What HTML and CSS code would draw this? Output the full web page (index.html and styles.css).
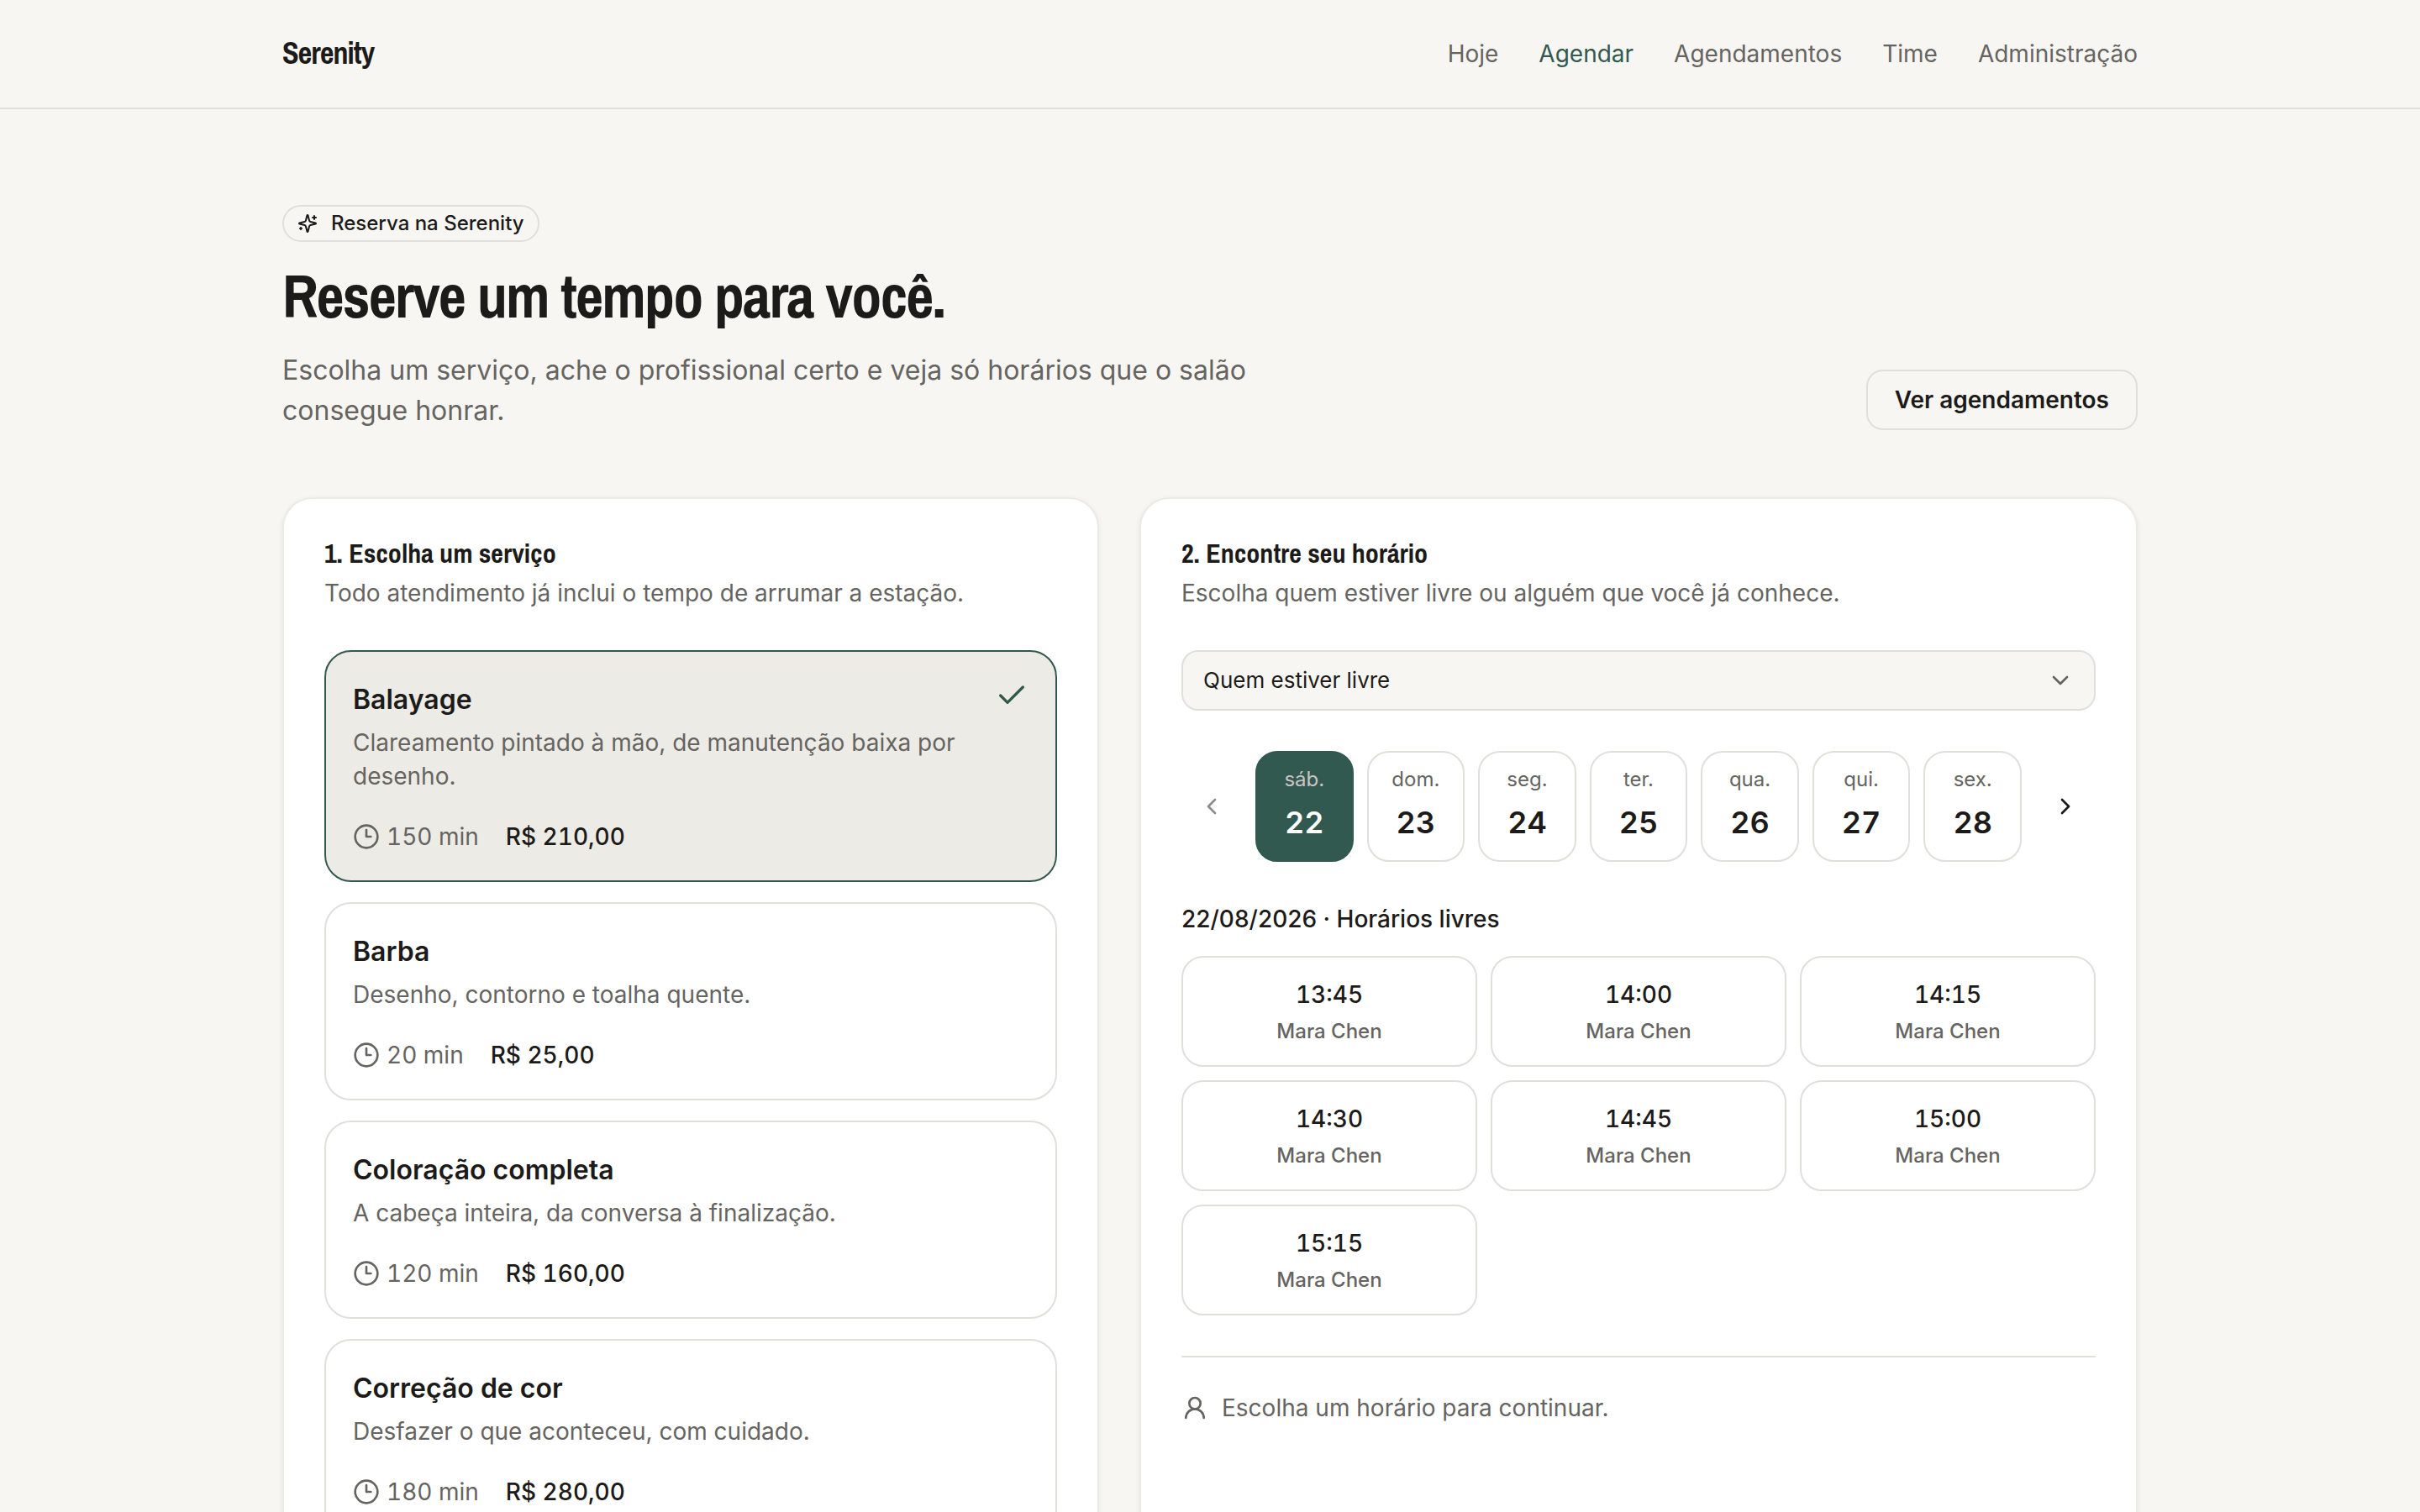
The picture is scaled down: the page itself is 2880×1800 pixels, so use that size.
FILE: index.html
```html
<!DOCTYPE html>
<html lang="pt-BR">
<head>
  <meta charset="UTF-8">
  <meta name="viewport" content="width=device-width, initial-scale=1.0">
  <title>Serenity</title>
  <link rel="stylesheet" href="styles.css">
</head>
<body>
  <!-- Shared icons -->
  <svg class="sprite" aria-hidden="true">
    <symbol id="clock" viewBox="0 0 24 24"><circle cx="12" cy="12" r="10"/><path d="M12 6v6h4"/></symbol>
    <symbol id="check" viewBox="0 0 24 24"><path d="M20 6 9 17l-5-5"/></symbol>
    <symbol id="user" viewBox="0 0 24 24"><circle cx="12" cy="8" r="5"/><path d="M20 21a8 8 0 0 0-16 0"/></symbol>
    <symbol id="chevron-down" viewBox="0 0 24 24"><path d="m6 9 6 6 6-6"/></symbol>
    <symbol id="chevron-left" viewBox="0 0 24 24"><path d="m15 18-6-6 6-6"/></symbol>
    <symbol id="chevron-right" viewBox="0 0 24 24"><path d="m9 18 6-6-6-6"/></symbol>
    <symbol id="sparkles" viewBox="0 0 24 24"><path d="M9.937 15.5A2 2 0 0 0 8.5 14.063l-6.135-1.582a.5.5 0 0 1 0-.962L8.5 9.936A2 2 0 0 0 9.937 8.5l1.582-6.135a.5.5 0 0 1 .963 0L14.063 8.5A2 2 0 0 0 15.5 9.937l6.135 1.581a.5.5 0 0 1 0 .964L15.5 14.063a2 2 0 0 0-1.437 1.437l-1.582 6.135a.5.5 0 0 1-.963 0z"/><path d="M20 3v4"/><path d="M22 5h-4"/><path d="M4 17v2"/><path d="M5 18H3"/></symbol>
  </svg>

  <header class="site-header">
    <div class="container header-inner">
      <a class="brand">Serenity</a>
      <nav class="nav">
        <a>Hoje</a>
        <a class="active">Agendar</a>
        <a>Agendamentos</a>
        <a>Time</a>
        <a>Administração</a>
      </nav>
    </div>
  </header>

  <main class="container main">
    <section class="intro">
      <div class="intro-text">
        <span class="badge"><svg class="icon icon-sm"><use href="#sparkles"/></svg>Reserva na Serenity</span>
        <h1>Reserve um tempo para você.</h1>
        <p>Escolha um serviço, ache o profissional certo e veja só horários que o salão consegue honrar.</p>
      </div>
      <a class="button">Ver agendamentos</a>
    </section>

    <div class="columns">
      <section class="card">
        <h2>1. Escolha um serviço</h2>
        <p class="card-description">Todo atendimento já inclui o tempo de arrumar a estação.</p>
        <div class="services">
          <div class="service selected">
            <div class="service-top">
              <div>
                <h3>Balayage</h3>
                <p>Clareamento pintado à mão, de manutenção baixa por desenho.</p>
              </div>
              <svg class="icon icon-lg"><use href="#check"/></svg>
            </div>
            <div class="meta"><span class="duration"><svg class="icon"><use href="#clock"/></svg>150 min</span><span class="price">R$ 210,00</span></div>
          </div>
          <div class="service">
            <h3>Barba</h3>
            <p>Desenho, contorno e toalha quente.</p>
            <div class="meta"><span class="duration"><svg class="icon"><use href="#clock"/></svg>20 min</span><span class="price">R$ 25,00</span></div>
          </div>
          <div class="service">
            <h3>Coloração completa</h3>
            <p>A cabeça inteira, da conversa à finalização.</p>
            <div class="meta"><span class="duration"><svg class="icon"><use href="#clock"/></svg>120 min</span><span class="price">R$ 160,00</span></div>
          </div>
          <div class="service">
            <h3>Correção de cor</h3>
            <p>Desfazer o que aconteceu, com cuidado.</p>
            <div class="meta"><span class="duration"><svg class="icon"><use href="#clock"/></svg>180 min</span><span class="price">R$ 280,00</span></div>
          </div>
        </div>
      </section>

      <section class="card">
        <h2>2. Encontre seu horário</h2>
        <p class="card-description">Escolha quem estiver livre ou alguém que você já conhece.</p>
        <div class="select"><span>Quem estiver livre</span><svg class="icon"><use href="#chevron-down"/></svg></div>

        <div class="week">
          <button class="arrow" disabled aria-label="Semana anterior"><svg class="icon"><use href="#chevron-left"/></svg></button>
          <div class="days">
            <div class="day selected"><span>sáb.</span><strong>22</strong></div>
            <div class="day"><span>dom.</span><strong>23</strong></div>
            <div class="day"><span>seg.</span><strong>24</strong></div>
            <div class="day"><span>ter.</span><strong>25</strong></div>
            <div class="day"><span>qua.</span><strong>26</strong></div>
            <div class="day"><span>qui.</span><strong>27</strong></div>
            <div class="day"><span>sex.</span><strong>28</strong></div>
          </div>
          <button class="arrow" aria-label="Próxima semana"><svg class="icon"><use href="#chevron-right"/></svg></button>
        </div>

        <p class="slots-title">22/08/2026 · Horários livres</p>
        <div class="slots">
          <div class="slot"><strong>13:45</strong><span>Mara Chen</span></div>
          <div class="slot"><strong>14:00</strong><span>Mara Chen</span></div>
          <div class="slot"><strong>14:15</strong><span>Mara Chen</span></div>
          <div class="slot"><strong>14:30</strong><span>Mara Chen</span></div>
          <div class="slot"><strong>14:45</strong><span>Mara Chen</span></div>
          <div class="slot"><strong>15:00</strong><span>Mara Chen</span></div>
          <div class="slot"><strong>15:15</strong><span>Mara Chen</span></div>
        </div>

        <div class="hint"><svg class="icon"><use href="#user"/></svg>Escolha um horário para continuar.</div>
      </section>
    </div>
  </main>
</body>
</html>
```
FILE: styles.css
```css
* {
  box-sizing: border-box;
}
body {
  margin: 0;
  height: 1800px;
  overflow: hidden;
  background-color: #f7f6f2;
  color: #1c1b19;
  font-family: Inter, sans-serif;
  font-size: 28px;
  line-height: 40px;
}
h1, h2, h3, p {
  margin: 0;
}
h1, h2, .brand {
  font-family: "Archivo Narrow", "Liberation Sans Narrow", "Arial Narrow", sans-serif;
  font-weight: 700;
}
.sprite {
  display: none;
}
.icon {
  width: 32px;
  height: 32px;
  flex: none;
  fill: none;
  stroke: currentColor;
  stroke-width: 2;
  stroke-linecap: round;
  stroke-linejoin: round;
}
.icon-sm {
  width: 24px;
  height: 24px;
}
.icon-lg {
  width: 40px;
  height: 40px;
  color: #32594f;
}
.container {
  width: 2208px;
  margin: 0 auto;
}

/* Header */
.site-header {
  border-bottom: 2px solid #dfdfdc;
}
.header-inner {
  height: 128px;
  display: flex;
  align-items: center;
  justify-content: space-between;
}
.brand {
  padding-bottom: 2px;
  font-size: 36px;
  letter-spacing: -0.9px;
}
.nav {
  display: flex;
  gap: 48px;
  color: #666461;
}
.nav .active {
  color: #32594f;
}

/* Intro */
.main {
  padding-top: 114px;
}
.intro {
  display: flex;
  justify-content: space-between;
  align-items: flex-end;
  height: 268px;
}
.intro-text {
  width: 1152px;
  height: 268px;
}
.badge {
  display: flex;
  align-items: center;
  gap: 16px;
  width: max-content;
  height: 44px;
  padding: 0 16px;
  border: 2px solid #dfdfdc;
  border-radius: 22px;
  font-size: 24px;
  font-weight: 500;
}
h1 {
  margin-top: 24px;
  font-size: 72px;
  line-height: 80px;
  letter-spacing: -1.8px;
}
.intro-text p {
  margin-top: 25px;
  font-size: 32px;
  line-height: 48px;
  color: #666461;
}
.button {
  height: 72px;
  padding: 14px 32px;
  border: 2px solid #dfdfdc;
  border-radius: 20px;
  font-weight: 600;
}

/* Cards */
.columns {
  margin-top: 80px;
  display: grid;
  grid-template-columns: 972px 1188px;
  gap: 48px;
}
.card {
  height: 1700px;
  padding: 48px;
  background-color: #fff;
  border: 2px solid #ebeae5;
  border-radius: 36px;
  box-shadow: 0 2px 6px rgba(0, 0, 0, 0.07);
}
h2 {
  font-size: 32px;
  line-height: 34px;
}
.card-description {
  margin: 10px 0 48px;
  color: #666461;
}

/* Services */
.services {
  display: grid;
  gap: 24px;
}
.service {
  padding: 32px;
  border: 2px solid #dfdfdc;
  border-radius: 32px;
}
.service.selected {
  background-color: #ecebe5;
  border-color: #32594f;
}
.service-top {
  display: flex;
  justify-content: space-between;
  gap: 24px;
}
.service h3 {
  font-size: 32px;
  line-height: 50px;
  font-weight: 600;
}
.service p {
  margin-top: 6px;
  color: #666461;
}
.meta {
  margin-top: 32px;
  display: flex;
  gap: 32px;
  font-variant-numeric: tabular-nums;
}
.duration {
  display: flex;
  align-items: center;
  gap: 8px;
  color: #666461;
}
.price {
  font-weight: 500;
}

/* Professional select */
.select {
  height: 72px;
  padding: 0 24px;
  display: flex;
  align-items: center;
  justify-content: space-between;
  background-color: #f7f6f2;
  border: 2px solid #dfdfdc;
  border-radius: 20px;
  font-size: 26px;
}
.select .icon {
  color: #666461;
}

/* Days */
.week {
  margin-top: 48px;
  display: flex;
  align-items: center;
  gap: 16px;
}
.arrow {
  width: 72px;
  height: 72px;
  padding: 0;
  display: flex;
  align-items: center;
  justify-content: center;
  border: none;
  background: none;
  color: #1c1b19;
}
.arrow:disabled {
  opacity: 0.5;
}
.days {
  flex: 1;
  display: grid;
  grid-template-columns: repeat(7, 1fr);
  gap: 16px;
}
.day {
  height: 132px;
  padding-top: 16px;
  border: 2px solid #dfdfdc;
  border-radius: 26px;
  display: flex;
  flex-direction: column;
  align-items: center;
}
.day span {
  font-size: 24px;
  line-height: 32px;
  color: #666461;
}
.day strong {
  margin-top: 7px;
  font-size: 36px;
  line-height: 56px;
  font-weight: 600;
  font-variant-numeric: tabular-nums;
}
.day.selected {
  background-color: #32594f;
  border-color: #32594f;
  color: #fff;
}
.day.selected span {
  color: #c8c5c2;
}

/* Time slots */
.slots-title {
  margin-top: 48px;
  font-weight: 500;
}
.slots {
  margin-top: 24px;
  display: grid;
  grid-template-columns: repeat(3, 1fr);
  gap: 16px;
}
.slot {
  height: 132px;
  padding-top: 24px;
  border: 2px solid #dfdfdc;
  border-radius: 26px;
  display: flex;
  flex-direction: column;
  align-items: center;
}
.slot strong {
  font-weight: 500;
  font-variant-numeric: tabular-nums;
}
.slot span {
  margin-top: 8px;
  font-size: 24px;
  line-height: 32px;
  font-weight: 500;
  color: #666461;
}
.hint {
  margin-top: 48px;
  padding-top: 40px;
  border-top: 2px solid #dfdfdc;
  display: flex;
  align-items: center;
  gap: 16px;
  color: #666461;
}
```
